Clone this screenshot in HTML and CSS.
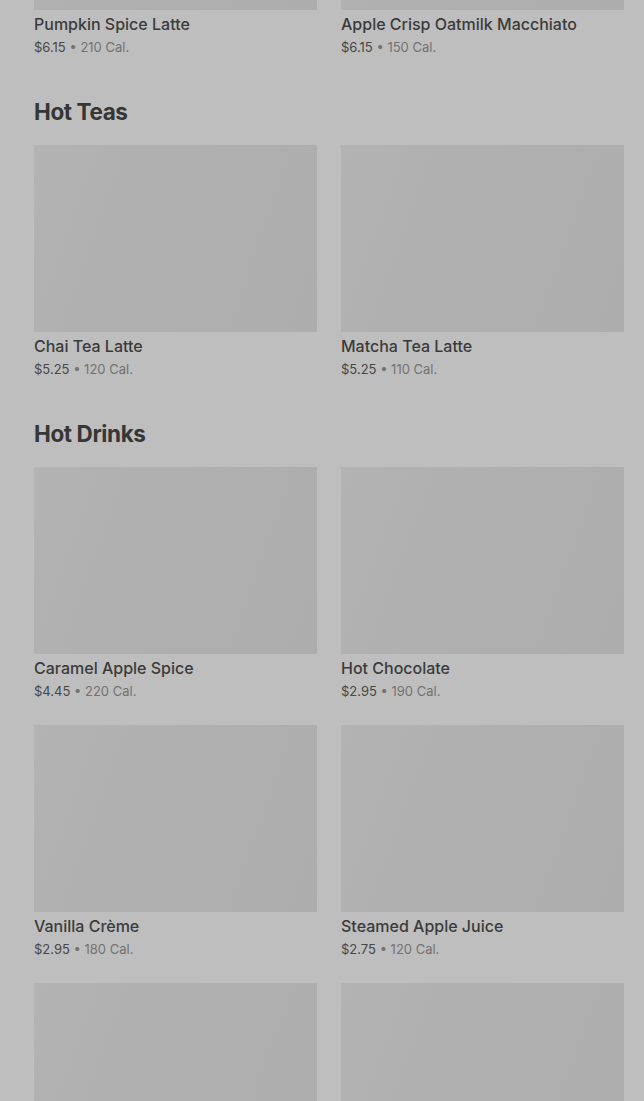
FILE: index.html
```html
<!DOCTYPE html>
<html lang="en">
<head>
  <meta charset="UTF-8">
  <title>Menu</title>
  <link rel="stylesheet" href="styles.css">
</head>
<body>

  <div class="menu">

    <div class="secao secao-topo">
      <div class="grade">
        <div class="item">
          <div class="foto"></div>
          <p class="nome">Pumpkin Spice Latte</p>
          <p class="info"><span class="preco">$6.15</span> • 210 Cal.</p>
        </div>
        <div class="item">
          <div class="foto"></div>
          <p class="nome">Apple Crisp Oatmilk Macchiato</p>
          <p class="info"><span class="preco">$6.15</span> • 150 Cal.</p>
        </div>
      </div>
    </div>

    <div class="secao">
      <h2>Hot Teas</h2>
      <div class="grade">
        <div class="item">
          <div class="foto"></div>
          <p class="nome">Chai Tea Latte</p>
          <p class="info"><span class="preco">$5.25</span> • 120 Cal.</p>
        </div>
        <div class="item">
          <div class="foto"></div>
          <p class="nome">Matcha Tea Latte</p>
          <p class="info"><span class="preco">$5.25</span> • 110 Cal.</p>
        </div>
      </div>
    </div>

    <div class="secao">
      <h2>Hot Drinks</h2>
      <div class="grade">
        <div class="item">
          <div class="foto"></div>
          <p class="nome">Caramel Apple Spice</p>
          <p class="info"><span class="preco">$4.45</span> • 220 Cal.</p>
        </div>
        <div class="item">
          <div class="foto"></div>
          <p class="nome">Hot Chocolate</p>
          <p class="info"><span class="preco">$2.95</span> • 190 Cal.</p>
        </div>
        <div class="item">
          <div class="foto"></div>
          <p class="nome">Vanilla Crème</p>
          <p class="info"><span class="preco">$2.95</span> • 180 Cal.</p>
        </div>
        <div class="item">
          <div class="foto"></div>
          <p class="nome">Steamed Apple Juice</p>
          <p class="info"><span class="preco">$2.75</span> • 120 Cal.</p>
        </div>
        <div class="item">
          <div class="foto"></div>
          <p class="nome">&nbsp;</p>
          <p class="info">&nbsp;</p>
        </div>
        <div class="item">
          <div class="foto"></div>
          <p class="nome">&nbsp;</p>
          <p class="info">&nbsp;</p>
        </div>
      </div>
    </div>

  </div>

</body>
</html>
```

FILE: styles.css
```css
* {
  box-sizing: border-box;
  margin: 0;
  padding: 0;
}

html, body {
  background-color: #bebebe;
  height: 100%;
  overflow: hidden;
}

body {
  font-family: Inter, "Noto Sans", sans-serif;
  color: #3a3a3a;
}

.menu {
  padding: 0 20px 0 34px;
}

.secao {
  margin-top: 39px;
}

.secao-topo {
  margin-top: -177px;
}

.secao h2 {
  font-size: 22.5px;
  font-weight: 700;
  line-height: 32px;
  letter-spacing: -0.4px;
  color: #363636;
  margin-bottom: 17px;
}

.grade {
  display: grid;
  grid-template-columns: 1fr 1fr;
  column-gap: 24px;
  row-gap: 24px;
}

.foto {
  height: 187px;
  background: linear-gradient(110deg, #b3b3b3 0%, #b0b0b0 30%, #adadad 100%);
}

.nome {
  margin-top: 4px;
  font-size: 16px;
  font-weight: 500;
  line-height: 20px;
  color: #3b3b3b;
  white-space: nowrap;
}

.info {
  margin-top: 3px;
  font-size: 13px;
  line-height: 20px;
  color: #727272;
}

.preco {
  color: #474747;
}
```
